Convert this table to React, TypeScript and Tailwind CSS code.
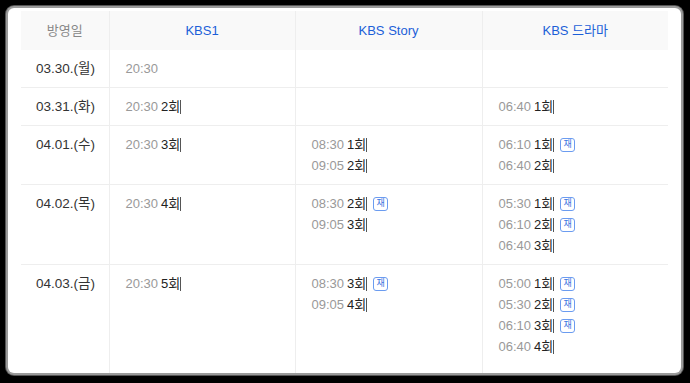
import React from "react";

type Ep = { t: string; e?: string; re?: boolean };
type Row = { d: string; k1: Ep[]; st: Ep[]; dr: Ep[] };

const rows: Row[] = [
  { d: "03.30.(월)", k1: [{ t: "20:30" }], st: [], dr: [] },
  { d: "03.31.(화)", k1: [{ t: "20:30", e: "2회" }], st: [], dr: [{ t: "06:40", e: "1회" }] },
  {
    d: "04.01.(수)",
    k1: [{ t: "20:30", e: "3회" }],
    st: [{ t: "08:30", e: "1회" }, { t: "09:05", e: "2회" }],
    dr: [{ t: "06:10", e: "1회", re: true }, { t: "06:40", e: "2회" }],
  },
  {
    d: "04.02.(목)",
    k1: [{ t: "20:30", e: "4회" }],
    st: [{ t: "08:30", e: "2회", re: true }, { t: "09:05", e: "3회" }],
    dr: [
      { t: "05:30", e: "1회", re: true },
      { t: "06:10", e: "2회", re: true },
      { t: "06:40", e: "3회" },
    ],
  },
  {
    d: "04.03.(금)",
    k1: [{ t: "20:30", e: "5회" }],
    st: [{ t: "08:30", e: "3회", re: true }, { t: "09:05", e: "4회" }],
    dr: [
      { t: "05:00", e: "1회", re: true },
      { t: "05:30", e: "2회", re: true },
      { t: "06:10", e: "3회", re: true },
      { t: "06:40", e: "4회" },
    ],
  },
];

function Cell({ eps, last }: { eps: Ep[]; last?: boolean }) {
  return (
    <td className={`align-top pl-[16px] pt-[8px] pb-[8px] ${last ? "" : "border-r border-[#eeeeee]"}`}>
      {eps.map((p, i) => (
        <div key={i} className="flex items-center h-[21px]">
          <span className="text-[#999999]">{p.t}</span>
          {p.e && (
            <span className="ml-[3px] text-[#222222] flex items-center">
              {p.e}
              <span className="inline-block w-px h-[14px] bg-[#555555]"></span>
            </span>
          )}
          {p.re && (
            <span className="ml-[6px] inline-flex items-center justify-center w-[15px] h-[14px] rounded-[3px] border border-[#6b9cf0] text-[#3b74e0] text-[9px] leading-none">
              재
            </span>
          )}
        </div>
      ))}
    </td>
  );
}

export default function App() {
  return (
    <div
      className="w-[690px] h-[383px] bg-black pt-[8px] pl-[8px] overflow-hidden"
      style={{ fontFamily: '"Liberation Sans", "Noto Sans CJK KR", sans-serif' }}
    >
      <div className="w-[673px] h-[365px] bg-white rounded-[6px] pl-[13px] pt-[3px] overflow-hidden shadow-[0_0_0_2px_#9a9a9a,0_0_0_3px_#555]">
        <table className="border-collapse text-[13px] leading-[21px] w-[647px] table-fixed">
          <colgroup>
            <col className="w-[88px]" />
            <col className="w-[186px]" />
            <col className="w-[187px]" />
            <col className="w-[186px]" />
          </colgroup>
          <thead>
            <tr className="bg-[#f9f9f9] h-[39px]">
              <th className="font-normal text-[#888888] text-[13px] border-r border-[#eeeeee] text-center">방영일</th>
              <th className="font-normal text-[#1c5fd8] border-r border-[#eeeeee] text-center">KBS1</th>
              <th className="font-normal text-[#1c5fd8] border-r border-[#eeeeee] text-center">KBS Story</th>
              <th className="font-normal text-[#1c5fd8] text-center">KBS 드라마</th>
            </tr>
          </thead>
          <tbody>
            {rows.map((r, i) => (
              <tr key={i} className={i < rows.length - 1 ? "border-b border-[#eeeeee]" : ""}>
                <td className="align-top pl-[15px] pt-[8px] pb-[8px] text-[#333333] text-[13.5px] border-r border-[#eeeeee]">
                  {r.d}
                </td>
                <Cell eps={r.k1} />
                <Cell eps={r.st} />
                <Cell eps={r.dr} last />
              </tr>
            ))}
            <tr>
              <td className="h-[30px] border-r border-[#eeeeee]"></td>
              <td className="border-r border-[#eeeeee]"></td>
              <td className="border-r border-[#eeeeee]"></td>
              <td></td>
            </tr>
          </tbody>
        </table>
      </div>
    </div>
  );
}
